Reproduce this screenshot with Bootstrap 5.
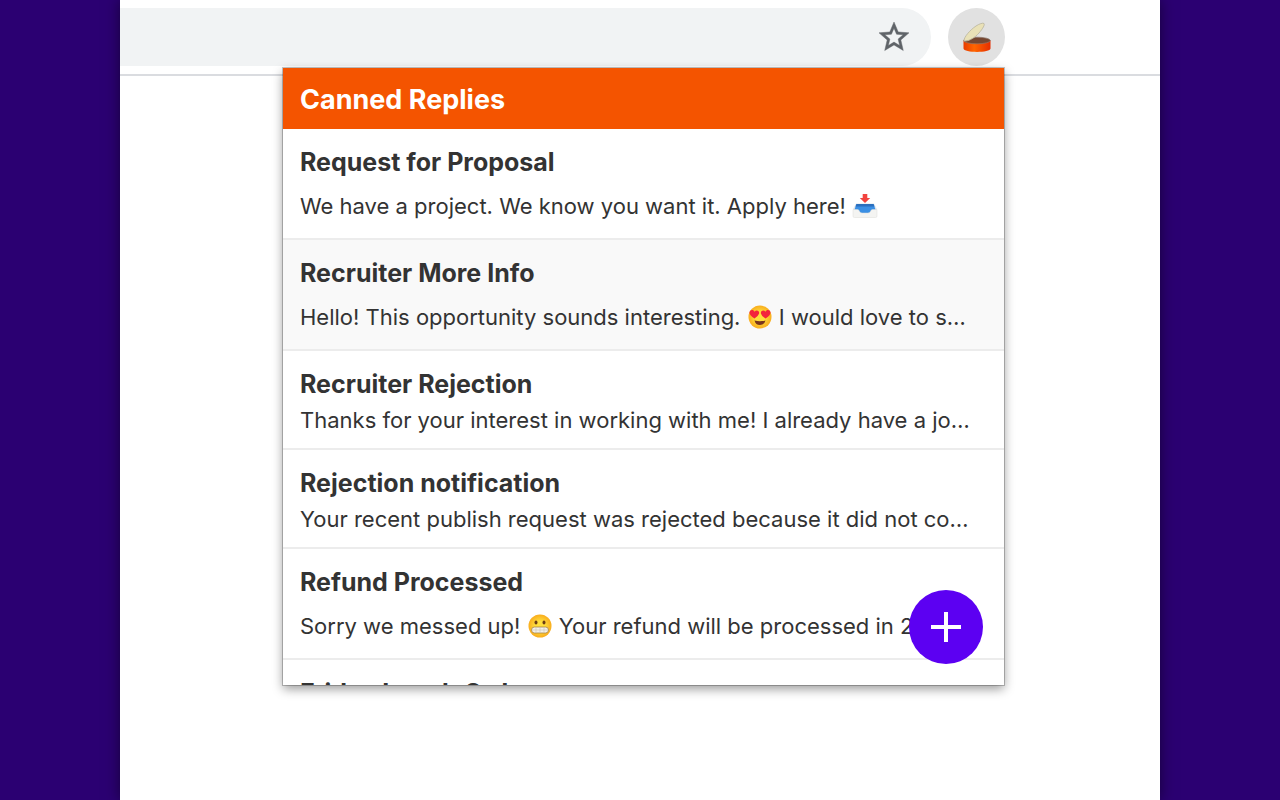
<!DOCTYPE html>
<html lang="en">
<head>
<meta charset="utf-8">
<meta name="viewport" content="width=device-width, initial-scale=1">
<title>Canned Replies</title>
<link href="https://cdn.jsdelivr.net/npm/bootstrap@5.3.0/dist/css/bootstrap.min.css" rel="stylesheet">
<style>
  body { background: #2b0072; font-family: Inter, "Liberation Sans", sans-serif; color: #333; }
  .sheet { max-width: 1040px; box-shadow: 0 0 14px rgba(0,0,0,.5); }
  .toolbar { padding: 8px 155px 8px 0; gap: 17px; border-bottom: 2px solid #dadce0; }
  .omnibox { height: 58px; background: #f1f3f4; border-radius: 0 29px 29px 0; padding-right: 19px; }
  .omnibox input { outline: 0; }
  .tool-button { width: 57px; height: 58px; background: #e1e1e1; }
  .popup { top: 68px; right: 156px; width: 721px; max-width: 100%; height: 617px; box-shadow: 0 0 0 1px rgba(0,0,0,.22), 0 4px 10px rgba(0,0,0,.4); }
  .popup-header { background: #f45400; padding: 1px 17px 0; font-size: 27px; font-weight: 700; line-height: 62px; height: 61px; }
  .reply { display: block; padding: 17px 17px 10px; border-bottom: 2px solid #ececec; color: #333; text-decoration: none; white-space: nowrap; }
  .reply.active-reply { background: #f9f9f9; }
  .reply-title { font-size: 25px; line-height: 32px; font-weight: 700; margin: 0 0 2px; }
  .reply-text { font-size: 22px; line-height: 36px; margin: 0; overflow: hidden; }
  .with-emoji { padding: 8px 0 4px; }
  .emoji { width: 26px; height: 24px; vertical-align: -4px; }
  .fab { right: 21px; bottom: 21px; width: 74px; height: 74px; background: #5c00f2; }
</style>
</head>
<body>
<div class="sheet position-relative bg-white mx-auto min-vh-100">
  <header class="toolbar d-flex align-items-center">
    <div class="omnibox d-flex flex-grow-1 align-items-center">
      <input class="flex-grow-1 border-0 bg-transparent" type="text" aria-label="Address">
      <button class="btn border-0 p-0 lh-1" type="button" aria-label="Bookmark this page">
        <svg width="36" height="36" viewBox="0 0 24 24" fill="#5f6368" stroke="#5f6368" stroke-width=".3"><path d="M22 9.24l-7.19-.62L12 2 9.19 8.63 2 9.24l5.46 4.73L5.82 21 12 17.27 18.18 21l-1.63-7.03L22 9.24zM12 15.4l-3.76 2.27 1-4.28-3.32-2.88 4.38-.38L12 6.1l1.71 4.04 4.38.38-3.32 2.88 1 4.28L12 15.4z"/></svg>
      </button>
    </div>
    <button class="tool-button btn border-0 rounded-circle p-0 lh-1" type="button" aria-label="Canned Replies">
      <svg width="30" height="32" viewBox="0 0 30 32">
        <defs><linearGradient id="can"><stop stop-color="#e83b00"/><stop offset=".4" stop-color="#ff6500"/><stop offset="1" stop-color="#e62e00"/></linearGradient></defs>
        <path d="M1.500 19.500v8c0 4.500 27 4.500 27 0v-8z" fill="url(#can)"/>
        <ellipse cx="15" cy="19.500" rx="13.300" ry="3.300" fill="#754631" stroke="#8c7568" stroke-width=".7"/>
        <path d="M2 20C1.500 16.500 8 9 14 5c3-2 7-3.500 8-2.500s-1 5-5 9.500C13 16.500 7 20.500 2 20z" fill="#e9e1b7" stroke="#b9b49d" stroke-width=".8"/>
      </svg>
    </button>
  </header>

  <main class="popup position-absolute bg-white overflow-hidden">
    <h1 class="popup-header text-white m-0">Canned Replies</h1>
    <nav aria-label="Replies">
      <a class="reply" href="#">
        <h2 class="reply-title">Request for Proposal</h2>
        <p class="reply-text with-emoji">We have a project. We know you want it. Apply here!
          <svg class="emoji" viewBox="0 0 24 24" role="img" aria-label="Inbox">
            <path d="M3 9.500h18l3 5.500v6H0v-6z" fill="#e2e8ed"/>
            <path d="M3.500 10h17l2 5.500-4 5h-13l-4-5z" fill="#3b8fe4"/>
            <path d="M3.500 10h17l1 2.500h-19z" fill="#2b6fbd"/>
            <path d="M0 15.500h4.500q1.500 0 2 1.800.5 1.700 2.500 1.700h6q2 0 2.500-1.700.5-1.800 2-1.800H24V22q0 1.500-1.500 1.500h-21Q0 23.500 0 22z" fill="#f4f4f2" stroke="#dcdcd8" stroke-width=".5"/>
            <path d="M9.700 0h4.600v4h2.900L12 9 6.800 4h2.900z" fill="#f2433f"/>
          </svg></p>
      </a>
      <a class="reply active-reply" href="#">
        <h2 class="reply-title">Recruiter More Info</h2>
        <p class="reply-text with-emoji">Hello! This opportunity sounds interesting.
          <svg class="emoji" viewBox="0 0 24 24" role="img" aria-label="Heart eyes">
            <defs><radialGradient id="face"><stop offset=".4" stop-color="#ffdf3d"/><stop offset="1" stop-color="#f9ad1d"/></radialGradient></defs>
            <circle cx="12" cy="12" r="11.500" fill="url(#face)"/>
            <path d="M6.500 13.500Q1.500 10.500 1.500 7.500c0-3 4-3.500 5-.8 2-2.500 5.500-.7 4.500 2Q10 11.500 6.500 13.500zM17.500 13.500q5-3 5-6c0-3-4-3.500-5-.8-2-2.500-5.500-.7-4.500 2Q14 11.500 17.500 13.500z" fill="#f3243c"/>
            <path d="M6.500 15.500q5.500 1.500 11 0-1 4.500-5.500 4.500t-5.500-4.500z" fill="#79351c"/>
          </svg> I would love to s…</p>
      </a>
      <a class="reply" href="#">
        <h2 class="reply-title">Recruiter Rejection</h2>
        <p class="reply-text">Thanks for your interest in working with me! I already have a jo…</p>
      </a>
      <a class="reply" href="#">
        <h2 class="reply-title">Rejection notification</h2>
        <p class="reply-text">Your recent publish request was rejected because it did not co…</p>
      </a>
      <a class="reply" href="#">
        <h2 class="reply-title">Refund Processed</h2>
        <p class="reply-text with-emoji">Sorry we messed up!
          <svg class="emoji" viewBox="0 0 24 24" role="img" aria-label="Grimace">
            <circle cx="12" cy="12" r="11.500" fill="url(#face)"/>
            <ellipse cx="8" cy="8.500" rx="1.500" ry="2" fill="#6b3c13"/><ellipse cx="16" cy="8.500" rx="1.500" ry="2" fill="#6b3c13"/>
            <rect x="3.500" y="13" width="17" height="6" rx="3" fill="#f4f1e8" stroke="#a98343" stroke-width=".8"/>
            <path d="M4 16h16M8 13v6M12 13v6M16 13v6" stroke="#c9c3b5" stroke-width=".6"/>
          </svg> Your refund will be processed in 2</p>
      </a>
      <a class="reply" href="#">
        <h2 class="reply-title">Friday Lunch Order</h2>
      </a>
    </nav>
    <button class="fab btn border-0 rounded-circle position-absolute p-0 lh-1" type="button" aria-label="Add reply">
      <svg width="30" height="30" viewBox="0 0 30 30"><path d="M15 0v30M0 15h30" stroke="#fff" stroke-width="4"/></svg>
    </button>
  </main>
</div>
<script src="https://cdn.jsdelivr.net/npm/bootstrap@5.3.0/dist/js/bootstrap.bundle.min.js"></script>
</body>
</html>
